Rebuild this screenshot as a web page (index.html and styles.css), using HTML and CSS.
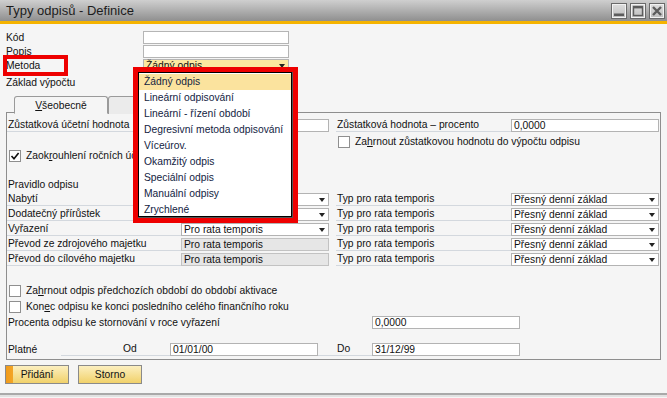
FILE: index.html
```html
<!DOCTYPE html>
<html lang="cs">
<head>
<meta charset="utf-8">
<title>Typy odpisů - Definice</title>
<link rel="stylesheet" href="styles.css">
</head>
<body>
<div class="titlebar">
  <span class="title">Typy odpisů - Definice</span>
  <div class="winbtns">
    <span class="winbtn"><svg width="12" height="12" viewBox="0 0 12 12"><rect x="1" y="8.5" width="10" height="2.5" fill="#5c5c5c"/></svg></span>
    <span class="winbtn"><svg width="12" height="12" viewBox="0 0 12 12"><rect x="1.5" y="1.5" width="9" height="9" fill="none" stroke="#5c5c5c" stroke-width="1.4"/><rect x="1" y="1" width="10" height="2.4" fill="#5c5c5c"/></svg></span>
    <span class="winbtn"><svg width="12" height="12" viewBox="0 0 12 12"><path d="M2 2 L10 10 M10 2 L2 10" stroke="#5c5c5c" stroke-width="2.4"/></svg></span>
  </div>
</div>

<div class="header">
  <div class="hrow"><span class="hlabel">Kód</span><span class="hinput"></span></div>
  <div class="hrow"><span class="hlabel">Popis</span><span class="hinput"></span></div>
  <div class="hrow"><span class="hlabel">Metoda</span><span class="hinput select focus">Žádný odpis</span></div>
  <div class="hrow base"><span class="hlabel">Základ výpočtu</span><span class="hinput select"></span></div>
</div>

<div class="tabs">
  <div class="tab active"><u>V</u>šeobecně</div>
  <div class="tab"></div>
</div>

<div class="panel">
  <div class="row r-first">
    <div class="field"><span class="lbl">Zůstatková účetní hodnota</span><span class="inp"></span></div>
    <div class="field"><span class="lbl">Zůstatková hodnota – procento</span><span class="inp">0,0000</span></div>
  </div>
  <div class="row r-chk-right">
    <div></div>
    <label class="chk"><span class="box"></span>Za<u>h</u>rnout zůstatkovou hodnotu do výpočtu odpisu</label>
  </div>
  <div class="row r-chk-left">
    <label class="chk"><span class="box checked"><svg width="10" height="10" viewBox="0 0 10 10"><path d="M1.5 5 L4 7.8 L8.6 2" fill="none" stroke="#111" stroke-width="1.6"/></svg></span>Zaok<u>r</u>ouhlení ročních účetních hodnot</label>
    <div></div>
  </div>
  <div class="row r-title">
    <span class="plain">Pravidlo odpisu</span>
    <div></div>
  </div>
  <div class="row r-rule">
    <div class="field"><span class="lbl">Nabytí</span><span class="inp sel">Pro rata temporis</span></div>
    <div class="field"><span class="lbl">Typ pro rata temporis</span><span class="inp sel">Přesný denní základ</span></div>
  </div>
  <div class="row r-rule">
    <div class="field"><span class="lbl">Dodatečný přírůstek</span><span class="inp sel">Pro rata temporis</span></div>
    <div class="field"><span class="lbl">Typ pro rata temporis</span><span class="inp sel">Přesný denní základ</span></div>
  </div>
  <div class="row r-rule">
    <div class="field"><span class="lbl">Vyřazení</span><span class="inp sel">Pro rata temporis</span></div>
    <div class="field"><span class="lbl">Typ pro rata temporis</span><span class="inp sel">Přesný denní základ</span></div>
  </div>
  <div class="row r-rule">
    <div class="field"><span class="lbl">Převod ze zdrojového majetku</span><span class="inp dis">Pro rata temporis</span></div>
    <div class="field"><span class="lbl">Typ pro rata temporis</span><span class="inp sel">Přesný denní základ</span></div>
  </div>
  <div class="row r-rule">
    <div class="field"><span class="lbl">Převod do cílového majetku</span><span class="inp dis">Pro rata temporis</span></div>
    <div class="field"><span class="lbl">Typ pro rata temporis</span><span class="inp sel">Přesný denní základ</span></div>
  </div>
  <div class="line r-chk1">
    <label class="chk"><span class="box"></span>Za<u>h</u>rnout odpis předchozích období do období aktivace</label>
  </div>
  <div class="line r-chk2">
    <label class="chk"><span class="box"></span>Kon<u>e</u>c odpisu ke konci posledního celého finančního roku</label>
  </div>
  <div class="line r-pct">
    <span class="pct-lbl">Procenta odpisu ke stornování v roce vyřazení</span><span class="inp">0,0000</span>
  </div>
  <div class="line r-valid">
    <span class="valid-lbl">Platné</span>
    <span class="lbl od">Od</span><span class="inp">01/01/00</span>
    <span class="lbl do">Do</span><span class="inp">31/12/99</span>
  </div>
</div>

<div class="actions">
  <button class="btn primary">Přidání</button>
  <button class="btn">Storno</button>
</div>
<div class="bottomline"></div>

<div class="mark mark-metoda"></div>
<div class="mark mark-list">
  <ul class="dropdown">
    <li class="hl">Žádný odpis</li>
    <li>Lineární odpisování</li>
    <li>Lineární - řízení období</li>
    <li>Degresivní metoda odpisování</li>
    <li>Víceúrov.</li>
    <li>Okamžitý odpis</li>
    <li>Speciální odpis</li>
    <li>Manuální odpisy</li>
    <li>Zrychlené</li>
  </ul>
</div>
</body>
</html>
```

FILE: styles.css
```css
* { box-sizing: border-box; }
html, body { margin: 0; padding: 0; }
body {
  width: 667px;
  height: 398px;
  overflow: hidden;
  position: relative;
  background: #f5f5f5;
  font-family: "Liberation Sans", Arial, sans-serif;
  font-size: 10.3px;
  color: #111;
}

/* title bar */
.titlebar {
  height: 24px;
  border-bottom: 3px solid #f5b300;
  background: linear-gradient(#cfcfcf, #8f8f8f);
  display: flex;
  align-items: center;
  justify-content: space-between;
  padding: 0 2px 0 6px;
}
.title { font-size: 13px; color: #1c1c1c; }
.winbtns { display: flex; gap: 3px; align-self: flex-start; margin-top: 3px; }
.winbtn {
  width: 16px; height: 16px;
  border: 1px solid #6a6a6a;
  background: linear-gradient(#dedede, #bcbcbc);
  box-shadow: inset 0 0 0 1px #f2f2f2;
  display: flex; align-items: center; justify-content: center;
}

/* header */
.header { padding: 7px 0 0 6px; display: flex; flex-direction: column; gap: 1px; }
.hrow { display: flex; height: 13px; align-items: center; }
.hrow.base { margin-top: 3px; }
.hlabel { width: 137px; }
.hinput {
  width: 146px; height: 13px;
  border: 1px solid #b5b5b5;
  background: #fff;
  padding-left: 2px;
  line-height: 11px;
  display: flex; align-items: center;
}
.hinput.focus { background: #fbe8a0; }
.select::after, .sel::after {
  content: "";
  margin-left: auto;
  margin-right: 3px;
  border-left: 3.5px solid transparent;
  border-right: 3.5px solid transparent;
  border-top: 4px solid #222;
}

/* tabs */
.tabs { display: flex; padding-left: 14px; margin-top: 7px; height: 17px; }
.tab {
  width: 94px; height: 18px;
  border: 1px solid #9a9a9a;
  border-bottom: none;
  border-radius: 3px 3px 0 0;
  background: #ebebeb;
  text-align: center;
  line-height: 17px;
}
.tab.active { background: #f5f5f5; border-bottom: 1px solid #f5f5f5; }

/* panel */
.panel {
  width: 655px; height: 248px;
  margin-left: 6px;
  margin-top: -1px;
  border: 1px solid #8e8e8e;
}
.row {
  display: grid;
  grid-template-columns: 322px 323px;
  column-gap: 7px;
  height: 13px;
}
.field { display: flex; }
.lbl {
  flex: 1;
  border-bottom: 1px solid #d3d8de;
  padding-left: 1px;
  line-height: 12px;
  white-space: nowrap;
}
.inp {
  width: 148px; height: 13px;
  border: 1px solid #b3b3b3;
  background: #fff;
  padding-left: 2px;
  line-height: 11px;
  display: flex; align-items: center;
  flex: none;
  white-space: nowrap;
}
.inp.dis { background: #e6e6e6; border-color: #c2c2c2; }
.plain { padding-left: 1px; line-height: 13px; }

.r-first { margin-top: 6px; }
.r-chk-right { margin-top: 3px; }
.r-chk-left { margin-top: 1px; }
.r-title { margin-top: 16px; }
.r-rule { margin-top: 2px; }

.chk { display: flex; align-items: center; height: 13px; padding-left: 2px; white-space: nowrap; }
.box {
  width: 12px; height: 12px;
  border: 1px solid #8f8f8f;
  background: #fff;
  margin-right: 5px;
  display: flex; align-items: center; justify-content: center;
}

.line { display: flex; height: 13px; align-items: center; }
.r-chk1 { margin-top: 18px; }
.r-chk2 { margin-top: 3px; }
.r-pct { margin-top: 3px; }
.r-valid { margin-top: 14px; }
.pct-lbl { width: 365px; padding-left: 1px; }
.valid-lbl { width: 54px; padding-left: 1px; }
.lbl.od { flex: none; width: 109px; padding-left: 62px; }
.lbl.do { flex: none; width: 54px; padding-left: 19px; }

/* buttons */
.actions { display: flex; gap: 9px; padding-left: 5px; margin-top: 5px; }
.btn {
  width: 64px; height: 19px;
  border: 1px solid #8a8a8a;
  background: linear-gradient(#fcefbf, #f1d16a);
  font: inherit;
  color: #111;
  padding: 0;
}
.btn.primary {
  background: linear-gradient(to right, #f09a1a 0, #f3a526 7px, transparent 7px), linear-gradient(#fcefbf, #f1d16a);
}
.bottomline { margin-top: 9px; height: 4px; border-top: 2px solid #a9a9a9; background: #e2e2e2; }

/* overlays: annotation marks and open dropdown */
.mark { position: absolute; border: 5px solid #ee0000; }
.mark-metoda { left: 3px; top: 55px; width: 65px; height: 21px; border-width: 4px; }
.mark-list { left: 133px; top: 67px; width: 165px; height: 156px; background: #555; }
.dropdown {
  list-style: none;
  margin: 0;
  padding: 1px 0 0 0;
  width: 154px; height: 145px;
  background: #fff;
  border: 1px solid #000;
}
.dropdown li { height: 16px; line-height: 16px; padding-left: 5px; color: #13233f; white-space: nowrap; }
.dropdown li.hl { background: #fbe39e; }
```
